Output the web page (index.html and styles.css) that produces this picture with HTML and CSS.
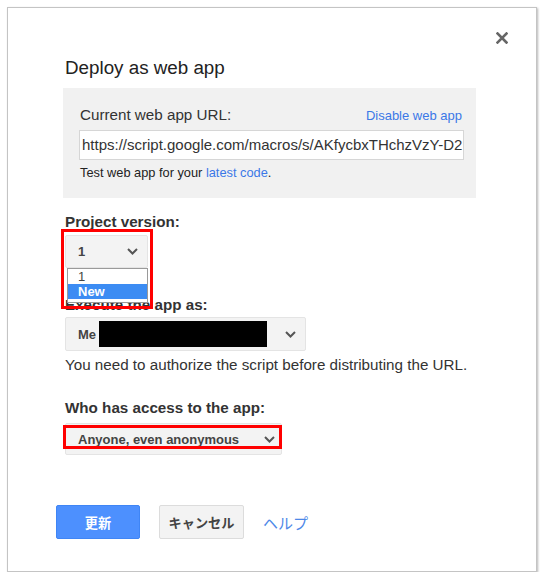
FILE: index.html
```html
<!DOCTYPE html>
<html>
<head>
<meta charset="utf-8">
<link rel="stylesheet" href="styles.css">
</head>
<body>
<div class="dialog">
  <div class="topbar">
    <svg class="close" width="12" height="12" viewBox="0 0 12 12"><path d="M1.5 1.5 L10.5 10.5 M10.5 1.5 L1.5 10.5" stroke="#666" stroke-width="2.6" stroke-linecap="square"/></svg>
  </div>
  <div class="title">Deploy as web app</div>
  <div class="panel">
    <div class="panel-head">
      <span class="panel-label">Current web app URL:</span>
      <span class="link small-link">Disable web app</span>
    </div>
    <div class="url-box">https://script.google.com/macros/s/AKfycbxTHchzVzY-D2</div>
    <div class="test-line">Test web app for your <span class="link">latest code</span>.</div>
  </div>

  <div class="label first-label">Project version:</div>
  <div class="select version">
    <span class="sel-text">1</span>
    <svg class="chev" width="11" height="7" viewBox="0 0 11 7"><polyline points="1,1 5.5,5.5 10,1" fill="none" stroke="#555" stroke-width="2"/></svg>
    <div class="menu">
      <div class="opt">1</div>
      <div class="opt sel">New</div>
    </div>
    <div class="annot annot-version"></div>
  </div>

  <div class="label exec-label">Execute the app as:</div>
  <div class="select me">
    <span class="sel-text">Me</span>
    <span class="redact"></span>
    <svg class="chev" width="11" height="7" viewBox="0 0 11 7"><polyline points="1,1 5.5,5.5 10,1" fill="none" stroke="#555" stroke-width="2"/></svg>
  </div>
  <div class="note">You need to authorize the script before distributing the URL.</div>

  <div class="label access-label">Who has access to the app:</div>
  <div class="select access">
    <span class="sel-text">Anyone, even anonymous</span>
    <svg class="chev" width="11" height="7" viewBox="0 0 11 7"><polyline points="1,1 5.5,5.5 10,1" fill="none" stroke="#555" stroke-width="2"/></svg>
    <div class="annot annot-access"></div>
  </div>

  <div class="buttons">
    <div class="btn primary">更新</div>
    <div class="btn secondary">キャンセル</div>
    <span class="help">ヘルプ</span>
  </div>
</div>
</body>
</html>
```
FILE: styles.css
```css
html, body {
  margin: 0;
  padding: 0;
  background: #fff;
}
body {
  font-family: "Liberation Sans", Arial, "Noto Sans CJK JP", sans-serif;
  color: #333;
}
.dialog {
  margin: 7px 0 0 7px;
  width: 530px;
  height: 565px;
  box-sizing: border-box;
  border: 1px solid #c4c4c4;
  box-shadow: 1px 1px 2px rgba(0,0,0,0.28);
  padding-left: 57px;
  background: #fff;
}
.topbar {
  display: flex;
  justify-content: flex-end;
  padding: 24px 28px 0 0;
  height: 12px;
}
.close { display: block; }
.title {
  margin-top: 13px;
  font-size: 18.8px;
  line-height: 22px;
  color: #222;
}
.panel {
  margin-top: 9px;
  margin-left: -2px;
  width: 413px;
  box-sizing: border-box;
  background: #f1f1f1;
  padding: 19px 12px 19px 16px;
}
.panel-head {
  display: flex;
  justify-content: space-between;
  align-items: center;
  height: 16px;
  padding-left: 1px;
}
.panel-label {
  font-size: 15.2px;
  line-height: 16px;
  color: #333;
}
.link { color: #3b78e7; }
.small-link {
  font-size: 13px;
  margin-right: 2px;
}
.url-box {
  margin-top: 7px;
  height: 30px;
  box-sizing: border-box;
  border: 1px solid #d6d6d6;
  background: #fff;
  font-size: 15px;
  line-height: 28px;
  padding-left: 2px;
  white-space: nowrap;
  overflow: hidden;
  color: #333;
}
.test-line {
  margin-top: 6px;
  padding-left: 1px;
  font-size: 12.8px;
  line-height: 13px;
  color: #222;
}
.label {
  font-size: 15.2px;
  line-height: 16px;
  font-weight: bold;
  color: #333;
}
.first-label { margin-top: 16px; }
.exec-label { margin-top: 29px; }
.access-label { margin-top: 27px; }
.select {
  position: relative;
  display: flex;
  align-items: center;
  justify-content: space-between;
  box-sizing: border-box;
  background: #f3f3f3;
  border: 1px solid #e4e4e4;
  border-radius: 2px;
  padding: 0 9px 0 12px;
}
.sel-text {
  font-size: 13px;
  font-weight: bold;
  color: #444;
}
.chev { display: block; flex: none; }
.version {
  margin-top: 5px;
  width: 83px;
  height: 33px;
}
.menu {
  position: absolute;
  left: 1px;
  top: 32px;
  width: 81px;
  box-sizing: border-box;
  border: 1px solid #9a9a9a;
  background: #fff;
  padding-bottom: 3px;
}
.opt {
  font-size: 13px;
  line-height: 15px;
  height: 15px;
  padding-left: 10px;
  color: #444;
}
.opt.sel {
  background: #3c8cf3;
  color: #fff;
  font-weight: bold;
}
.annot {
  position: absolute;
  box-sizing: border-box;
  border: 3px solid #f00;
  pointer-events: none;
}
.annot-version {
  left: -5px;
  top: -7px;
  width: 92px;
  height: 80px;
}
.me {
  margin-top: 4px;
  width: 241px;
  height: 34px;
  justify-content: flex-start;
}
.me .chev { margin-left: auto; }
.redact {
  display: block;
  width: 168px;
  height: 26px;
  background: #000;
  margin-left: 3px;
}
.note {
  margin-top: 6px;
  font-size: 15.2px;
  line-height: 16px;
  color: #333;
}
.access {
  margin-top: 7px;
  width: 217px;
  height: 32px;
  padding-left: 12px;
  padding-right: 6px;
}
.annot-access {
  left: -3px;
  top: 1px;
  width: 219px;
  height: 24px;
}
.buttons {
  margin-top: 50px;
  margin-left: -9px;
  display: flex;
  align-items: center;
  gap: 19px;
}
.btn {
  height: 34px;
  box-sizing: border-box;
  border-radius: 2px;
  display: flex;
  align-items: center;
  justify-content: center;
  font-size: 13.2px;
  font-weight: bold;
}
.primary {
  width: 84px;
  background: #4d90fe;
  border: 1px solid #3f85f5;
  color: #fff;
}
.secondary {
  width: 85px;
  background: #f3f3f3;
  border: 1px solid #dcdcdc;
  color: #444;
}
.help {
  font-size: 15px;
  color: #4d88e8;
}
```
